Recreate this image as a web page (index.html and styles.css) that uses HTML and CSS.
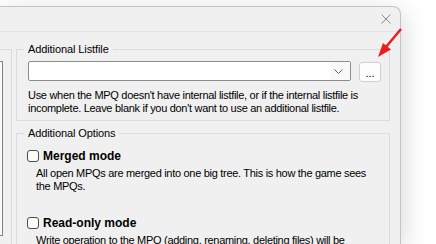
FILE: index.html
```html
<!DOCTYPE html>
<html>
<head>
<meta charset="utf-8">
<link rel="stylesheet" href="styles.css">
</head>
<body>
<div class="window">
  <div class="titlebar">
    <svg class="close" width="10" height="10" viewBox="0 0 10 10"><path d="M0.5 0.5 L9.5 9.5 M9.5 0.5 L0.5 9.5" stroke="#8a8a8a" stroke-width="1" fill="none"/></svg>
  </div>
  <div class="client">
    <div class="leftgroup">
      <div class="listbox"></div>
    </div>
    <div class="rightcol">
      <fieldset class="group g1">
        <legend>Additional Listfile</legend>
        <div class="comborow">
          <div class="combo">
            <div class="combo-arrow">
              <svg width="9" height="5" viewBox="0 0 9 5"><polyline points="0.5,0.5 4.5,4.5 8.5,0.5" fill="none" stroke="#5f5f5f" stroke-width="1"/></svg>
            </div>
          </div>
          <div class="btn">...</div>
        </div>
        <p class="desc">Use when the MPQ doesn't have internal listfile, or if the internal listfile is incomplete. Leave blank if you don't want to use an additional listfile.</p>
      </fieldset>
      <fieldset class="group g2">
        <legend>Additional Options</legend>
        <div class="check first"><span class="box"></span><span class="clabel">Merged mode</span></div>
        <p class="cdesc">All open MPQs are merged into one big tree. This is how the game sees the MPQs.</p>
        <div class="check second"><span class="box"></span><span class="clabel">Read-only mode</span></div>
        <p class="cdesc">Write operation to the MPQ (adding, renaming, deleting files) will be disabled.</p>
      </fieldset>
    </div>
  </div>
</div>
<svg class="arrow" width="436" height="244" viewBox="0 0 436 244">
  <line x1="401" y1="29" x2="386" y2="47" stroke="#ee1c1c" stroke-width="2.5"/>
  <polygon points="378,57 383,43 391,49.5" fill="#ee1c1c"/>
</svg>
</body>
</html>
```
FILE: styles.css
```css
html, body {
  margin: 0;
  padding: 0;
}
body {
  width: 436px;
  height: 244px;
  overflow: hidden;
  background: #ffffff;
  font-family: "Liberation Sans", Arial, sans-serif;
  font-size: 11px;
  letter-spacing: -0.3px;
  color: #000;
  position: relative;
}
.window {
  box-sizing: border-box;
  margin-top: 6px;
  width: 401px;
  height: 238px;
  background: #f0f0f0;
  border-top: 1px solid #c4c4c4;
  border-right: 1px solid #c4c4c4;
  border-top-right-radius: 8px;
  box-shadow: 2px 6px 26px rgba(0, 0, 0, 0.16);
  overflow: hidden;
}
.titlebar {
  height: 24px;
  display: flex;
  justify-content: flex-end;
  align-items: center;
  padding-right: 9px;
  border-bottom: 1px solid #e4e4e4;
}
.close {
  display: block;
}
.client {
  display: flex;
  align-items: flex-start;
}
.leftgroup {
  box-sizing: border-box;
  width: 12px;
  margin-top: 17px;
  height: 220px;
  border-top: 1px solid #dcdcdc;
  border-right: 1px solid #dcdcdc;
  padding-top: 11px;
}
.listbox {
  box-sizing: border-box;
  width: 3px;
  height: 175px;
  background: #fafafa;
  border: 1px solid #828282;
  border-left: none;
}
.rightcol {
  margin-left: 4px;
  width: 374px;
}
.group {
  box-sizing: border-box;
  width: 374px;
  margin: 0;
  border: 1px solid #dcdcdc;
  padding: 0 7px 5px 11px;
  min-width: 0;
}
.group legend {
  padding: 0 4px;
  margin-left: -4px;
  line-height: 14px;
  height: 14px;
  letter-spacing: -0.1px;
}
.g1 {
  margin-top: 10px;
}
.comborow {
  display: flex;
  gap: 8px;
  margin-top: 5px;
}
.combo {
  box-sizing: border-box;
  width: 323px;
  height: 20px;
  background: #ffffff;
  border: 1px solid #8c8c8c;
  border-radius: 2px;
  display: flex;
  justify-content: flex-end;
}
.combo-arrow {
  width: 20px;
  height: 18px;
  display: flex;
  align-items: center;
  justify-content: center;
  background: #f9f9f9;
}
.combo-arrow svg {
  display: block;
  margin-left: -3px;
}
.btn {
  box-sizing: border-box;
  width: 22px;
  height: 20px;
  margin-top: 1px;
  background: #fdfdfd;
  border: 1px solid #d0d0d0;
  border-radius: 3px;
  text-align: center;
  line-height: 21px;
  font-size: 11px;
  letter-spacing: 0;
}
.desc {
  margin: 7px 0 0 0;
  line-height: 13px;
}
.g2 {
  margin-top: 5px;
  padding-bottom: 20px;
}
.check {
  display: flex;
  align-items: center;
  height: 14px;
}
.check.first {
  margin-top: 9px;
}
.check.second {
  margin-top: 23px;
}
.box {
  box-sizing: border-box;
  width: 12px;
  height: 12px;
  margin-left: -1px;
  border: 1px solid #4d4d4d;
  border-radius: 3px;
  background: #fbfbfb;
}
.clabel {
  margin-left: 4px;
  font-weight: bold;
  font-size: 12px;
  letter-spacing: 0;
}
.cdesc {
  margin: 4px 0 0 8px;
  line-height: 13px;
}
.arrow {
  position: absolute;
  left: 0;
  top: 0;
  pointer-events: none;
}
```
